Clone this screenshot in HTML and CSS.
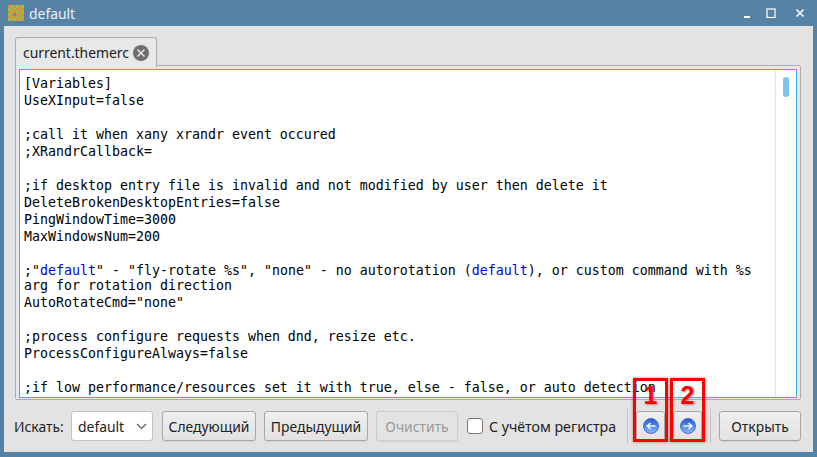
FILE: index.html
```html
<!DOCTYPE html>
<html lang="ru">
<head>
<meta charset="utf-8">
<title>default</title>
<link rel="stylesheet" href="styles.css">
</head>
<body>
<div class="window">
  <header class="titlebar">
    <svg class="app-icon" width="16" height="16" viewBox="0 0 6 6" shape-rendering="crispEdges">
      <rect width="6" height="6" fill="#e58a3c"/>
      <path fill="#8fc24a" d="M1 0h1v1H1zM3 0h1v1H3zM5 0h1v1H5zM0 1h1v1H0zM2 1h1v1H2zM4 1h1v1H4zM1 2h1v1H1zM3 2h1v1H3zM5 2h1v1H5zM0 3h1v1H0zM4 3h1v1H4zM1 4h1v1H1zM3 4h1v1H3zM5 4h1v1H5zM0 5h1v1H0zM2 5h1v1H2zM4 5h1v1H4z"/>
      <rect x="2" y="3" width="1" height="1" fill="#7f79c4"/>
    </svg>
    <span class="title">default</span>
    <div class="wm-buttons">
      <svg class="wm-min" width="10" height="10" viewBox="0 0 10 10"><rect x="2" y="8" width="6" height="2" fill="#fff"/></svg>
      <svg width="10" height="10" viewBox="0 0 10 10"><rect x="1" y="1" width="8" height="8.5" fill="none" stroke="#fff" stroke-width="1.2"/></svg>
      <svg width="10" height="10" viewBox="0 0 10 10"><path d="M1.5 1.5l7 7M8.5 1.5l-7 7" stroke="#fff" stroke-width="1.6" fill="none"/></svg>
    </div>
  </header>
  <main class="content">
    <div class="tabs">
      <div class="tab">
        <span>current.themerc</span>
        <svg class="tab-close" width="16" height="16" viewBox="0 0 16 16"><circle cx="8" cy="8" r="8" fill="#6f6f6f"/><path d="M4.5 4.5l7 7M11.5 4.5l-7 7" stroke="#e8e8e8" stroke-width="1.5"/></svg>
      </div>
    </div>
    <section class="pane">
      <div class="editor">
        <pre class="code">[Variables]
UseXInput=false

;call it when xany xrandr event occured
;XRandrCallback=

;if desktop entry file is invalid and not modified by user then delete it
DeleteBrokenDesktopEntries=false
PingWindowTime=3000
MaxWindowsNum=200

;"<span class="kw">default</span>" - "fly-rotate %s", "none" - no autorotation (<span class="kw">default</span>), or custom command with %s<span class="wrapped">arg for rotation direction</span>AutoRotateCmd="none"

;process configure requests when dnd, resize etc.
ProcessConfigureAlways=false

;if low performance/resources set it with true, else - false, or auto detection</pre>
        <div class="scrollbar"><div class="thumb"></div></div>
      </div>
    </section>
    <div class="toolbar">
      <label class="find-label">Искать:</label>
      <div class="combo"><span>default</span><svg width="11" height="7" viewBox="0 0 11 7"><path d="M1 1l4.5 4.5L10 1" fill="none" stroke="#555" stroke-width="1.1"/></svg></div>
      <button class="btn btn-next">Следующий</button>
      <button class="btn btn-prev">Предыдущий</button>
      <button class="btn btn-clear" disabled>Очистить</button>
      <span class="check-box"></span>
      <span class="check-label">С учётом регистра</span>
      <span class="sep"></span>
      <button class="btn btn-icon">
        <svg width="16" height="16" viewBox="0 0 16 16"><defs><linearGradient id="ball" x1="0" y1="0" x2="0" y2="1"><stop offset="0" stop-color="#2558d4"/><stop offset="0.55" stop-color="#5a90ee"/><stop offset="1" stop-color="#8ab8f6"/></linearGradient></defs><circle cx="8" cy="8" r="7.5" fill="url(#ball)" stroke="#2f62dc" stroke-width="0.9"/><path d="M12.5 8H4.5M7.5 5L4.2 8l3.3 3" fill="none" stroke="#f2f6fe" stroke-width="1.5"/></svg>
        <span class="mark">1</span>
      </button>
      <button class="btn btn-icon">
        <svg width="16" height="16" viewBox="0 0 16 16"><circle cx="8" cy="8" r="7.5" fill="url(#ball)" stroke="#2f62dc" stroke-width="0.9"/><path d="M3.5 8h8M8.5 5l3.3 3-3.3 3" fill="none" stroke="#f2f6fe" stroke-width="1.5"/></svg>
        <span class="mark">2</span>
      </button>
      <span class="sep"></span>
      <button class="btn btn-open">Открыть</button>
    </div>
  </main>
</div>
</body>
</html>
```
FILE: styles.css
```css
* { box-sizing: border-box; }
html, body { margin: 0; height: 100%; overflow: hidden; }
body { font-family: "Noto Sans", sans-serif; font-size: 13.9px; color: #222; }
.window { width: 817px; height: 457px; background: #5682a6; display: flex; flex-direction: column; padding: 0 4px 5px; }
.titlebar { height: 26px; flex: none; display: flex; align-items: center; color: #e8f1f8; margin: 0 -4px; padding: 0 7px 0 8px; }
.app-icon { margin-right: 5px; }
.title { font-size: 13.9px; }
.wm-buttons { margin-left: auto; display: flex; align-items: center; gap: 19px; padding-right: 5px; }
.wm-min { margin-right: -5px; }
.content { flex: 1; background: #e3e3e3; display: flex; flex-direction: column; padding: 11px 12px 0 11px; min-height: 0; }
.tabs { display: flex; height: 29px; flex: none; margin-bottom: -1px; position: relative; z-index: 1; }
.tab { width: 142px; height: 30px; background: #e8e8e8; border: 1px solid #adadad; border-bottom: none; border-radius: 3px 3px 0 0; display: flex; align-items: center; padding: 0 7px; justify-content: space-between; }
.pane { height: 335px; flex: none; border: 1px solid #adadad; background: #e8e8e8; padding: 3px 3px 1px 3px; border-radius: 0 2px 2px 2px; }
.editor { height: 100%; background: #fff; border: 1px solid #3daee9; display: flex; overflow: hidden; }
.code { flex: 1; margin: 0; padding: 5px 0 0 4px; font-family: "DejaVu Sans Mono", monospace; font-size: 13.29px; line-height: 17px; color: #000; overflow: hidden; }
.kw { color: #0000e6; }
.wrapped { display: block; margin-top: -2px; }
.scrollbar { width: 21px; flex: none; border-left: 1px solid #e4e4e4; padding: 7px 0 0 7px; }
.thumb { width: 6px; height: 20px; background: #7cc4ee; border-radius: 3px; }
.toolbar { flex: none; display: flex; align-items: center; height: 30px; margin-top: 11px; margin-left: -1px; }
.find-label { width: 57px; flex: none; }
.combo { width: 82px; height: 30px; background: #fff; border: 1px solid #c2c2c2; border-radius: 3px; display: flex; align-items: center; justify-content: space-between; padding: 0 5px 0 6px; margin-right: 9px; }
.btn { height: 30px; padding: 0; font: inherit; color: #222; background: linear-gradient(#efefef, #e2e2e2); border: 1px solid #a8a8a8; border-radius: 3px; position: relative; box-shadow: 0 1px 1px rgba(0,0,0,.08); }
.btn-next { width: 94px; margin-right: 8px; }
.btn-prev { width: 104px; margin-right: 8px; }
.btn-clear { width: 82px; margin-right: 9px; color: #9a9a9a; border-color: #cbcbcb; background: #e3e3e3; }
.check-box { width: 16px; height: 16px; background: #fff; border: 1px solid #777; border-radius: 3px; margin-right: 6px; }
.check-label { width: 127px; white-space: nowrap; font-size: 14.2px; }
.sep { width: 1px; height: 34px; background: #c4c4c4; margin: 0 8px 0 11px; }
.btn-icon { width: 29px; display: flex; align-items: center; justify-content: center; }
.btn-icon + .btn-icon { margin-left: 8px; }
.btn-icon + .sep { margin-left: 8px; margin-right: 8px; }
.mark { position: absolute; left: -4px; right: -4px; top: -34px; height: 64px; border: 3px solid #f00; font: bold 25px/28px "Liberation Sans", sans-serif; color: #f00; text-align: center; box-shadow: 0 0 3px rgba(120,0,0,.45); text-shadow: 1px 1px 2px rgba(120,0,0,.4); }
.btn-open { width: 82px; }
```
